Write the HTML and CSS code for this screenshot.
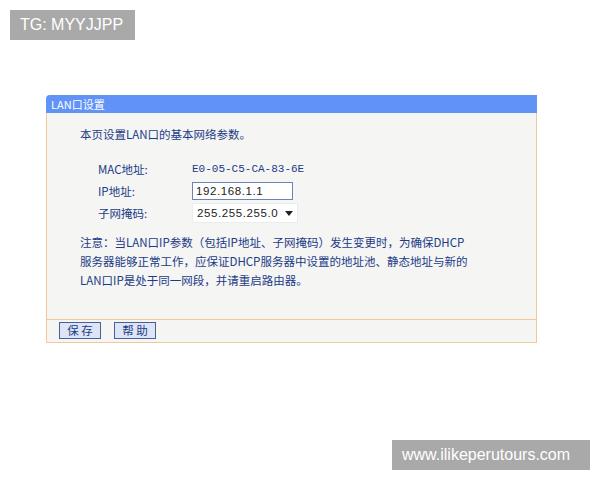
FILE: index.html
```html
<!DOCTYPE html>
<html lang="zh-CN">
<head>
    <meta charset="UTF-8">
    <title>LAN口设置</title>
    <link rel="stylesheet" href="styles.css">
</head>
<body>

<div class="tag tagTop">TG: MYYJJPP</div>

<div id="page">
    <!--LAN settings panel-->
    <div class="panel">
        <div class="panelTitle">LAN口设置</div>

        <div class="panelBody">
            <p class="intro">本页设置LAN口的基本网络参数。</p>

            <div class="fields">
                <div class="row">
                    <span class="label">MAC地址:</span>
                    <span class="value">E0-05-C5-CA-83-6E</span>
                </div>
                <div class="row">
                    <span class="label">IP地址:</span>
                    <input class="ipBox" type="text" value="192.168.1.1">
                </div>
                <div class="row">
                    <span class="label">子网掩码:</span>
                    <div class="maskBox">
                        <span>255.255.255.0</span>
                        <span class="arrow"></span>
                    </div>
                </div>
            </div>

            <p class="note">
                注意：当LAN口IP参数（包括IP地址、子网掩码）发生变更时，为确保DHCP<br>
                服务器能够正常工作，应保证DHCP服务器中设置的地址池、静态地址与新的<br>
                LAN口IP是处于同一网段，并请重启路由器。
            </p>
        </div>

        <div class="panelFoot">
            <button class="btn">保 存</button>
            <button class="btn">帮 助</button>
        </div>
    </div>
</div>

<div class="tag tagBottom">www.ilikeperutours.com</div>

</body>
</html>
```

FILE: styles.css
```css
/*whole page*/
body {
    margin: 0;
    background-color: #ffffff;
    font-family: "Noto Sans CJK SC", "DejaVu Sans", sans-serif;
    width: 600px;
    height: 480px;
    position: relative;
}

#page {
    padding: 95px 0 0 46px;
}

/*gray labels in the corners*/
.tag {
    position: absolute;
    background-color: #a9a9a9;
    color: #ffffff;
    font-family: "Liberation Sans", Arial, sans-serif;
    font-size: 16px;
    line-height: 30px;
    padding: 0 10px;
}

.tagTop {
    left: 10px;
    top: 10px;
    width: 105px;
}

.tagBottom {
    left: 392px;
    top: 440px;
    width: 178px;
}

/*the settings panel*/
.panel {
    width: 491px;
}

.panelTitle {
    background-color: #6192f6;
    color: #ffffff;
    font-size: 11px;
    height: 18px;
    line-height: 18px;
    padding-left: 5px;
    border-top-left-radius: 4px;
}

.panelBody {
    background-color: #f5f5f4;
    border-left: 1px solid #f3c79a;
    border-right: 1px solid #f3c79a;
    border-bottom: 1px solid #f3c79a;
    height: 206px;
    padding: 0 0 0 33px;
    color: #1b3b86;
    font-size: 11.5px;
}

.intro {
    margin: 0;
    padding-top: 13px;
    line-height: 16px;
}

.fields {
    padding: 16px 0 0 18px;
}

.row {
    display: flex;
    align-items: center;
    height: 22px;
}

.label {
    width: 94px;
}

.value {
    font-family: "Liberation Mono", monospace;
    font-size: 11px;
    color: #1b3b86;
}

.ipBox {
    width: 93px;
    height: 14px;
    padding: 1px 3px;
    margin: 0;
    border: 1px solid #6b83b6;
    background-color: #ffffff;
    font-family: "Liberation Sans", Arial, sans-serif;
    font-size: 11.5px;
    letter-spacing: 0.6px;
    color: #222222;
}

.maskBox {
    display: flex;
    justify-content: space-between;
    align-items: center;
    width: 96px;
    height: 18px;
    padding: 0 4px;
    background-color: #ffffff;
    border: 1px solid #ececec;
    font-family: "Liberation Sans", Arial, sans-serif;
    font-size: 11.5px;
    letter-spacing: 0.6px;
    color: #222222;
}

.arrow {
    width: 0;
    height: 0;
    border-left: 4px solid transparent;
    border-right: 4px solid transparent;
    border-top: 5px solid #222222;
}

.note {
    margin: 0;
    padding-top: 9px;
    line-height: 19px;
}

/*bottom button bar*/
.panelFoot {
    display: flex;
    gap: 13px;
    background-color: #f5f5f4;
    border-left: 1px solid #f3c79a;
    border-right: 1px solid #f3c79a;
    border-bottom: 1px solid #f3c79a;
    height: 20px;
    padding: 2px 0 0 12px;
}

.btn {
    width: 42px;
    height: 17px;
    padding: 0;
    background-color: #dde4f5;
    border: 1px solid #46609c;
    color: #1b3b86;
    font-family: "Noto Sans CJK SC", sans-serif;
    font-size: 11.5px;
    line-height: 15px;
}
```
